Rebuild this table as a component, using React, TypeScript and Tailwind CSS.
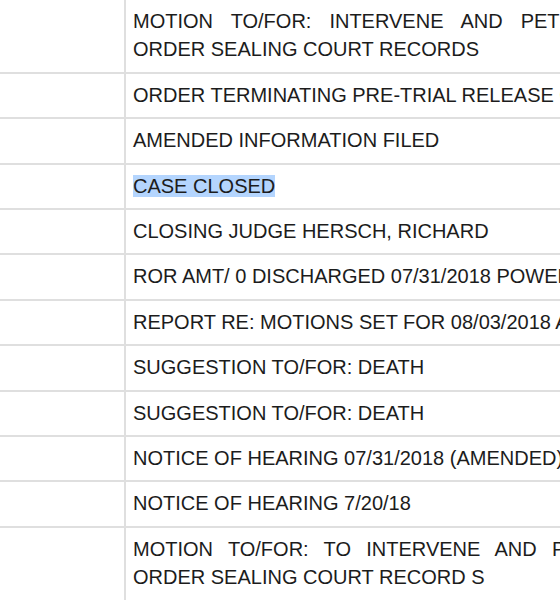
const entries: { id: number; text: string; selected?: boolean }[] = [
  {
    id: 1,
    text: 'MOTION TO/FOR: INTERVENE AND PETITION TO VACATE ORDER SEALING COURT RECORDS',
  },
  { id: 2, text: 'ORDER TERMINATING PRE-TRIAL RELEASE CONDITIONS' },
  { id: 3, text: 'AMENDED INFORMATION FILED' },
  { id: 4, text: 'CASE CLOSED', selected: true },
  { id: 5, text: 'CLOSING JUDGE HERSCH, RICHARD' },
  { id: 6, text: 'ROR AMT/ 0 DISCHARGED 07/31/2018 POWER NO.' },
  { id: 7, text: 'REPORT RE: MOTIONS SET FOR 08/03/2018 AT 9:00' },
  { id: 8, text: 'SUGGESTION TO/FOR: DEATH' },
  { id: 9, text: 'SUGGESTION TO/FOR: DEATH' },
  { id: 10, text: 'NOTICE OF HEARING 07/31/2018 (AMENDED)' },
  { id: 11, text: 'NOTICE OF HEARING 7/20/18' },
  {
    id: 12,
    text: 'MOTION TO/FOR: TO INTERVENE AND PETITION TO SEAL ORDER SEALING COURT RECORD S',
  },
];

export default function App() {
  return (
    <div className="h-screen w-full overflow-hidden bg-white font-['Liberation_Sans',Arial,sans-serif] text-[20px] text-[#1c1c1c]">
      <table className="-mt-[2px] w-[761px] table-fixed border-separate border-spacing-0">
        <colgroup>
          <col className="w-[126px]" />
          <col className="w-[635px]" />
        </colgroup>
        <tbody>
          {entries.map((entry) => (
            <tr key={entry.id}>
              <td className="border-t-2 border-r-2 border-[#dfdfdf]" />
              <td className="border-t-2 border-[#dfdfdf] pt-[7px] pb-2 pl-[7px] pr-2 text-justify align-top leading-[28.4px]">
                {entry.selected ? (
                  <span className="bg-[#b4d5fe]">{entry.text}</span>
                ) : (
                  entry.text
                )}
              </td>
            </tr>
          ))}
        </tbody>
      </table>
    </div>
  );
}
